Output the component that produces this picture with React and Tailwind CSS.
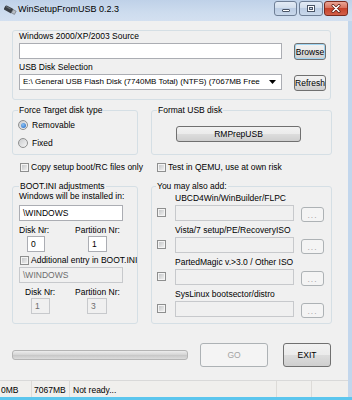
import React from "react";

const btn =
  "flex items-center justify-center rounded-[3px] border border-[#707070] bg-[linear-gradient(#f2f2f2,#ebebeb_50%,#dddddd_50%,#cfcfcf)]";
const btnOff =
  "flex items-center justify-center rounded-[3px] border border-[#adb2b5] bg-[#f4f4f4] text-[#838383]";
const box = "border border-[#d5dfe5] rounded-[3px]";
const txt = "h-[16px] border border-[#abadb3] bg-white flex items-center pl-[3px] whitespace-nowrap overflow-hidden";
const txtOff = "h-[16px] border border-[#c7c9cc] bg-[#f0f0f0] text-[#6d6d6d] flex items-center pl-[3px] whitespace-nowrap overflow-hidden";

const Check = () => (
  <div className="w-[9px] h-[9px] shrink-0 border border-[#8e8f8f] bg-[#f4f4f4] p-[1px]">
    <div className="w-full h-full bg-[linear-gradient(135deg,#c6c8ca,#eeeeee)]" />
  </div>
);

const Radio = ({ on }) => (
  <div className="w-[10px] h-[10px] shrink-0 rounded-full border border-[#8e8f8f] bg-[linear-gradient(135deg,#c9cbcd,#f6f6f6)] flex items-center justify-center">
    {on && <div className="w-[5px] h-[5px] rounded-full bg-[radial-gradient(circle_at_40%_35%,#8cc4f5,#1f63c0)]" />}
  </div>
);

const Legend = ({ children, ml = "ml-[5px]" }) => (
  <div className={`-mt-[6px] ${ml} px-[1px] bg-[#f0f0f0] w-fit whitespace-nowrap`}>{children}</div>
);

const Extra = ({ label, first }) => (
  <div className={`flex pl-[5px] ${first ? "mt-[2px]" : "mt-[3px]"}`}>
    <div className="w-[18px] pt-[15px]">
      <Check />
    </div>
    <div>
      <div className="whitespace-nowrap">{label}</div>
      <div className="flex mt-[2px]">
        <div className="w-[119px] h-[16px] border border-[#c7c9cc] bg-[#f0f0f0]" />
        <div className={`${btnOff} ml-[7px] mt-[2px] w-[23px] h-[15px] tracking-[1px] text-[#a8a8a8]`}>...</div>
      </div>
    </div>
  </div>
);

export default function App() {
  return (
    <div className="w-[352px] h-[400px] flex flex-col overflow-hidden bg-[#c4d6ec] font-['Liberation_Sans',Arial,sans-serif] text-[8.5px] leading-[10px] text-black">
      {/* title bar */}
      <div className="h-[21px] shrink-0 flex items-start bg-[linear-gradient(#bfd1e8,#cddcee_60%,#d3e0f0)]">
        <svg width="14" height="10" viewBox="0 0 14 10" className="ml-[3px] mt-[5px]">
          <g transform="rotate(28 7 5)">
            <rect x="1" y="2.5" width="9" height="5" rx="1.5" fill="#3a3f44" />
            <rect x="9.5" y="3.2" width="3.5" height="3.6" fill="#b9bec4" stroke="#6d747b" strokeWidth="0.6" />
            <rect x="2" y="3.2" width="5" height="1.2" fill="#6b7178" />
          </g>
        </svg>
        <div className="ml-[1px] mt-[3px] text-[9px] leading-[12px] whitespace-nowrap">WinSetupFromUSB 0.2.3</div>
        <div className="ml-auto mr-[4px] mt-[1px] flex">
          <div className="w-[23px] h-[15px] rounded-[3px] border border-[#6f7f96] bg-[linear-gradient(#e3ebf5,#d2deec_45%,#bccde4_50%,#c9d8ea)] flex items-end justify-center pb-[3px]">
            <div className="w-[8px] h-[3px] bg-white border border-[#4a5566] rounded-[1px]" />
          </div>
          <div className="ml-[2px] w-[24px] h-[15px] rounded-[3px] border border-[#6f7f96] bg-[linear-gradient(#e3ebf5,#d2deec_45%,#bccde4_50%,#c9d8ea)] flex items-center justify-center">
            <div className="w-[8px] h-[7px] border border-[#4a5566] bg-white p-[1px]">
              <div className="w-full h-full border border-[#4a5566] bg-[#c9d8ea]" />
            </div>
          </div>
          <div className="ml-[1px] w-[24px] h-[15px] rounded-[3px] border border-[#7a2a1e] bg-[linear-gradient(#eaa696,#d8725e_45%,#c7422a_50%,#d2604a)] flex items-center justify-center">
            <svg width="10" height="9" viewBox="0 0 10 9">
              <path d="M2 1.5 L8 7.5 M8 1.5 L2 7.5" stroke="#5a1a10" strokeWidth="3" strokeLinecap="round" />
              <path d="M2 1.5 L8 7.5 M8 1.5 L2 7.5" stroke="#ffffff" strokeWidth="1.6" strokeLinecap="round" />
            </svg>
          </div>
        </div>
      </div>

      <div className="flex flex-1 min-h-0">
        <div className="flex-1 bg-[#f0f0f0] flex flex-col">
          <div className="flex-1 pl-[12px] pt-[9px]">
            {/* source */}
            <div className={`${box} w-[319px] h-[70px] pl-[6px]`}>
              <div>Windows 2000/XP/2003 Source</div>
              <div className="flex items-start mt-[2px]">
                <div className={`${txt} w-[263px]`} />
                <div className={`${btn} ml-[12px] w-[32px] h-[17px] border-[#3c7fb1] bg-[linear-gradient(#f1f9fe,#ddf0fb_50%,#cbe8f8_50%,#bde1f5)] shadow-[inset_0_0_0_1px_#9fd5f3]`}>
                  Browse
                </div>
              </div>
              <div className="mt-[2px]">USB Disk Selection</div>
              <div className="flex items-start mt-[2px]">
                <div className={`${txt} w-[263px] pl-[2px] pr-[4px]`}>
                  <span className="flex-1 text-[8px]">E:\ General USB Flash Disk (7740MB Total) (NTFS) (7067MB Free</span>
                  <svg width="7" height="4" viewBox="0 0 7 4" className="ml-[3px] mr-[1px] shrink-0">
                    <path d="M0 0 L7 0 L3.5 4 Z" fill="#000" />
                  </svg>
                </div>
                <div className={`${btn} ml-[12px] mt-[1px] w-[32px] h-[16px]`}>Refresh</div>
              </div>
            </div>

            {/* disk type + format */}
            <div className="flex mt-[10px] gap-[13px]">
              <div className={`${box} w-[126px] h-[45px]`}>
                <Legend>Force Target disk type</Legend>
                <div className="flex items-center mt-[5px] ml-[5px] h-[10px]">
                  <Radio on />
                  <span className="ml-[4px]">Removable</span>
                </div>
                <div className="flex items-center mt-[8px] ml-[5px] h-[10px]">
                  <Radio />
                  <span className="ml-[4px]">Fixed</span>
                </div>
              </div>
              <div className={`${box} w-[181px] h-[45px]`}>
                <Legend>Format USB disk</Legend>
                <div className={`${btn} mt-[11px] ml-[24px] w-[125px] h-[16px]`}>RMPrepUSB</div>
              </div>
            </div>

            {/* check row */}
            <div className="flex mt-[7px] h-[10px] items-center">
              <div className="w-[139px] flex items-center pl-[8px]">
                <Check />
                <span className="ml-[2px] whitespace-nowrap">Copy setup boot/RC files only</span>
              </div>
              <div className="flex items-center pl-[6px]">
                <Check />
                <span className="ml-[2px] whitespace-nowrap">Test in QEMU, use at own risk</span>
              </div>
            </div>

            {/* boot.ini + extras */}
            <div className="flex mt-[14px] gap-[13px]">
              <div className={`${box} w-[126px] h-[138px]`}>
                <Legend ml="ml-[6px]">BOOT.INI adjustments</Legend>
                <div className="pl-[6px]">
                  <div className="whitespace-nowrap">Windows will be installed in:</div>
                  <div className={`${txt} w-[104px] mt-[4px]`}>\WINDOWS</div>
                  <div className="flex mt-[4px]">
                    <span className="w-[56px]">Disk Nr:</span>
                    <span>Partition Nr:</span>
                  </div>
                  <div className="flex mt-[1px]">
                    <div className={`${txt} ml-[8px] w-[18px]`}>0</div>
                    <div className={`${txt} ml-[43px] w-[19px]`}>1</div>
                  </div>
                  <div className="flex items-center mt-[3px] h-[10px]">
                    <div className="ml-[1px]"><Check /></div>
                    <span className="ml-[2px] whitespace-nowrap">Additional entry in BOOT.INI</span>
                  </div>
                  <div className={`${txtOff} w-[104px] mt-[2px]`}>\WINDOWS</div>
                  <div className="flex mt-[4px] pl-[6px]">
                    <span className="w-[50px]">Disk Nr:</span>
                    <span>Partition Nr:</span>
                  </div>
                  <div className="flex mt-[1px]">
                    <div className={`${txtOff} ml-[12px] w-[19px]`}>1</div>
                    <div className={`${txtOff} ml-[37px] w-[20px]`}>3</div>
                  </div>
                </div>
              </div>
              <div className={`${box} w-[181px] h-[138px]`}>
                <Legend ml="ml-[4px]">You may also add:</Legend>
                <Extra first label="UBCD4Win/WinBuilder/FLPC" />
                <Extra label="Vista/7 setup/PE/RecoveryISO" />
                <Extra label="PartedMagic v.>3.0 / Other ISO" />
                <Extra label="SysLinux bootsector/distro" />
              </div>
            </div>

            {/* progress + buttons */}
            <div className="flex items-center mt-[19px] h-[24px]">
              <div className="w-[176px] h-[10px] rounded-[3px] border border-[#b4b4b4] bg-[linear-gradient(#ececec,#d6d6d6_45%,#c8c8c8_55%,#dcdcdc)]" />
              <div className={`${btnOff} ml-[12px] w-[68px] h-[24px] text-[#a3a3a3]`}>GO</div>
              <div className={`${btn} ml-[15px] w-[48px] h-[24px]`}>EXIT</div>
            </div>
          </div>

          {/* status bar */}
          <div className="h-[17px] shrink-0 border-t border-[#d9d9d9] bg-[#f0efed] flex">
            <div className="w-[32px] pt-[4px] pl-[1px] border-r border-[#dddbd8]">0MB</div>
            <div className="w-[38px] pt-[4px] pl-[2px] border-r border-[#dddbd8]">7067MB</div>
            <div className="w-[207px] pt-[4px] pl-[3px] border-r border-[#dddbd8]">Not ready...</div>
            <div className="w-[35px] border-r border-[#dddbd8]" />
            <div className="flex-1" />
          </div>
        </div>
        <div className="w-[4px] bg-[#c2d6ec]" />
      </div>
      <div className="h-[3px] shrink-0 bg-[#5cc6ee]" />
    </div>
  );
}
